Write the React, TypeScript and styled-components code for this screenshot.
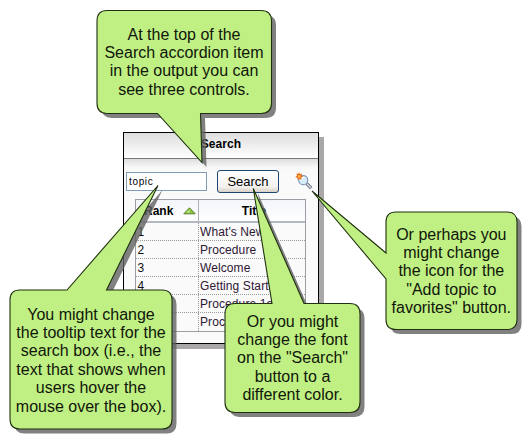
import React from "react";
import styled, { createGlobalStyle } from "styled-components";

const GlobalStyle = createGlobalStyle`
  html, body { margin: 0; background: #fff; }
  body { font-family: "Liberation Sans", Arial, sans-serif; color: #000; }
  *, *::before, *::after { box-sizing: border-box; }
`;

const Stage = styled.main`
  position: relative;
  width: 532px;
  height: 444px;
  overflow: hidden;
  padding: 132px 0 0 123px;
`;

const Panel = styled.section`
  width: 196px;
  height: 212px;
  border: 1px solid #000;
  background: #fafafb;
  box-shadow: 5px 5px 0 #a9a7a8;
`;

const PanelHeader = styled.h2`
  height: 26px;
  margin: 0;
  border-bottom: 1px solid #777;
  background: linear-gradient(#dedede, #e9e9e9 35%, #fff 100%);
  font-size: 12px;
  font-weight: bold;
  line-height: 23px;
  text-align: center;
  letter-spacing: 0.1px;
`;

const Controls = styled.div`
  display: flex;
  align-items: center;
  height: 40px;
  padding: 4px 0 0 2px;
  background: linear-gradient(#dedede, #f7f7f8 8px, #fafafb 12px);
`;

const SearchBox = styled.input`
  width: 81px;
  height: 19px;
  margin: 0;
  padding: 1px 0 0 2px;
  border: 1px solid #7f9db9;
  border-radius: 0;
  outline: none;
  background: #fff;
  color: #000;
  font: 10px "Liberation Sans", Arial, sans-serif;
  letter-spacing: 0.65px;
`;

const SearchButton = styled.button`
  width: 62px;
  height: 23px;
  margin: 0 0 0 10px;
  padding: 0;
  border: 1px solid #1d4670;
  border-radius: 3px;
  background: linear-gradient(#fff, #f3f2ee 75%, #d8d2c8);
  color: #000;
  font: 13px "Liberation Sans", Arial, sans-serif;
  line-height: 21px;
`;

const FavoriteButton = styled.button`
  width: 18px;
  height: 18px;
  margin: 0 0 0 16px;
  padding: 0;
  border: 0;
  background: none;
  line-height: 0;
`;

const Results = styled.div`
  width: 171px;
  margin-left: 11px;
  border: 1px solid #9a9da3;
  font-size: 12px;
`;

const ResultRow = styled.div`
  display: grid;
  grid-template-columns: 62px 1fr;
  height: 18px;
  border-bottom: 1px dotted #999;
  &:last-child { border-bottom: 0; }
`;

const HeadRow = styled(ResultRow)`
  height: 23px;
  border-bottom: 2px solid #b4b7c4;
  background: linear-gradient(#f3f5fa, #fff);
  font-weight: bold;
`;

const HeadCell = styled.div<{ $centered?: boolean }>`
  display: flex;
  align-items: center;
  justify-content: ${(p) => (p.$centered ? "center" : "flex-start")};
  gap: 10px;
  padding-left: ${(p) => (p.$centered ? 4 : 8)}px;
  border-left: ${(p) => (p.$centered ? "1px solid #aeb1b8" : "0")};
`;

const Cell = styled.div<{ $link?: boolean }>`
  padding-left: ${(p) => (p.$link ? 1 : 1.5)}px;
  border-left: ${(p) => (p.$link ? "1px dotted #999" : "0")};
  color: ${(p) => (p.$link ? "#2f1733" : "#111")};
  letter-spacing: 0.1px;
  line-height: 19px;
  white-space: nowrap;
  overflow: hidden;
`;

const CalloutLayer = styled.div`
  position: absolute;
  inset: 0;
  pointer-events: none;
`;

const Bubble = styled.svg`
  position: absolute;
  inset: 0;
  width: 532px;
  height: 444px;
`;

const Message = styled.p<{ $top: number; $center: number }>`
  position: absolute;
  top: ${(p) => p.$top}px;
  left: ${(p) => p.$center}px;
  transform: translateX(-50%);
  margin: 0;
  color: #10160a;
  font-size: 16px;
  line-height: 18.4px;
  text-align: center;
`;

const Line = styled.span`
  display: block;
  white-space: nowrap;
`;

type CalloutData = { path: string; top: number; center: number; lines: string[] };

const callouts: CalloutData[] = [
  {
    path: "M107 10.5H261Q271.5 10.5 271.5 21V103Q271.5 113.5 261 113.5H200.5L202 162.5L157.5 113.5H107Q97 113.5 97 103V21Q97 10.5 107 10.5Z",
    top: 25.5,
    center: 184,
    lines: ["At the top of the", "Search accordion item", "in the output you can", "see three controls."],
  },
  {
    path: "M20 290H67L158 185.5L106.5 290H162Q172 290 172 300V419Q172 429 162 429H20Q10 429 10 419V300Q10 290 20 290Z",
    top: 305.5,
    center: 91,
    lines: ["You might change", "the tooltip text for the", "search box (i.e., the", "text that shows when", "users hover the", "mouse over the box)."],
  },
  {
    path: "M235 303.5H272L253.3 188.5L304 303.5H350Q360 303.5 360 314V402Q360 412.5 350 412.5H235Q225 412.5 225 402V314Q225 303.5 235 303.5Z",
    top: 312.5,
    center: 292.5,
    lines: ["Or you might", "change the font", "on the \"Search\"", "button to a", "different color."],
  },
  {
    path: "M396 212H507Q517 212 517 222V319.5Q517 329.5 507 329.5H396Q386 329.5 386 319.5V279L312 191L386 253V222Q386 212 396 212Z",
    top: 225.5,
    center: 451.3,
    lines: ["Or perhaps you", "might change", "the icon for the", "\"Add topic to", "favorites\" button."],
  },
];

const results = ["What's New", "Procedure", "Welcome", "Getting Started", "Procedure 1a", "Procedure 2"];

function SortArrow() {
  return (
    <svg width="13" height="8" viewBox="0 0 13 8">
      <path d="M6.5 .8L12.2 6.8H.8Z" fill="#8fc544" stroke="#54842a" strokeWidth="1" strokeLinejoin="round" />
      <path d="M6.5 2.2L3 5.8H6.5Z" fill="#bfe58a" />
    </svg>
  );
}

function FavoriteIcon() {
  return (
    <svg width="18" height="18" viewBox="0 0 18 18">
      <path d="M11.4 11.4L16.2 16.2" stroke="#646b7a" strokeWidth="3.2" />
      <path d="M11.8 11.8L15.8 15.8" stroke="#d8dce3" strokeWidth="1.5" />
      <circle cx="8.2" cy="8.2" r="4.5" fill="#d5ecfb" stroke="#8294b8" strokeWidth="1.2" />
      <path d="M5.5 8.5A3 3 0 0 1 9.5 5.5" stroke="#fff" strokeWidth="1.3" fill="none" />
      <path d="M4 .3L5 2.2L7.2 1.4L6.5 3.6L8.2 4.7L6.2 5.6L6.5 7.8L4.4 6.7L2.5 8L2.4 5.8L.2 5L2 3.7L1.5 1.4L3.2 2Z" fill="#e56b12" />
      <circle cx="4.2" cy="4.5" r="1.4" fill="#ffb347" />
    </svg>
  );
}

function Callout({ path, top, center, lines }: CalloutData) {
  return (
    <CalloutLayer>
      <Bubble viewBox="0 0 532 444">
        <path d={path} transform="translate(4.5 4.5)" fill="#626262" fillOpacity="0.8" />
        <path d={path} fill="#c0f083" stroke="#203010" strokeWidth="1.1" />
      </Bubble>
      <Message $top={top} $center={center}>
        {lines.map((text) => (
          <Line key={text}>{text}</Line>
        ))}
      </Message>
    </CalloutLayer>
  );
}

export default function App() {
  return (
    <>
      <GlobalStyle />
      <Stage>
        <Panel>
          <PanelHeader>Search</PanelHeader>
          <Controls>
            <SearchBox defaultValue="topic" aria-label="Search" />
            <SearchButton>Search</SearchButton>
            <FavoriteButton aria-label="Add topic to favorites"><FavoriteIcon /></FavoriteButton>
          </Controls>
          <Results>
            <HeadRow>
              <HeadCell>Rank <SortArrow /></HeadCell>
              <HeadCell $centered>Title</HeadCell>
            </HeadRow>
            {results.map((title, i) => (
              <ResultRow key={title}>
                <Cell>{i + 1}</Cell>
                <Cell $link>{title}</Cell>
              </ResultRow>
            ))}
          </Results>
        </Panel>
        {callouts.map((c) => <Callout key={c.path} {...c} />)}
      </Stage>
    </>
  );
}
